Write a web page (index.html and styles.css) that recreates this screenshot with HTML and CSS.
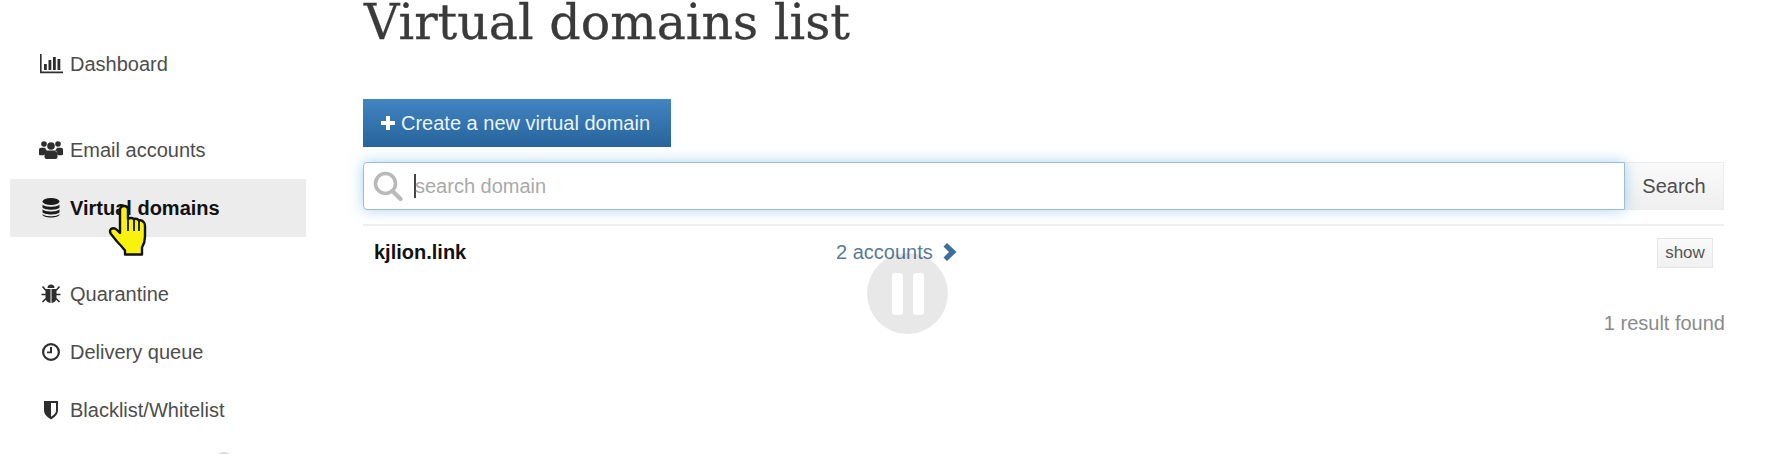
FILE: index.html
```html
<!DOCTYPE html>
<html lang="en">
<head>
<meta charset="utf-8">
<title>Virtual domains list</title>
<link rel="stylesheet" href="styles.css">
</head>
<body>
<div class="page">
  <nav class="sidebar">
    <div class="group group-first">
      <a class="item"><svg class="icon" viewBox="0 0 24 20"><path d="M1 0h1.600v17.600H24V19.200H1z"/><rect x="5" y="10" width="2.800" height="6"/><rect x="9.500" y="6" width="2.800" height="10"/><rect x="14" y="3" width="2.800" height="13"/><rect x="18.500" y="5" width="2.800" height="11"/></svg>Dashboard</a>
    </div>
    <div class="group">
      <a class="item"><svg class="icon" viewBox="0 0 24 20"><circle cx="5" cy="4" r="2.800"/><circle cx="19" cy="4" r="2.800"/><circle cx="12" cy="6" r="3.800"/><path d="M0 9.500q0-1.800 2-1.800h4q.8 2 2 3-2.500 1-3 4.500H1q-1 0-1-1zM24 9.500q0-1.800-2-1.800h-4q-.8 2-2 3 2.500 1 3 4.500h4q1 0 1-1zM9 10.500h6q3.500 0 3.500 4v2.800q0 1.700-2 1.700H7.500q-2 0-2-1.700v-2.800q0-4 3.500-4z"/></svg>Email accounts</a>
      <a class="item active"><svg class="icon" viewBox="0 0 24 20"><ellipse cx="12" cy="3.500" rx="8.500" ry="3.500"/><path d="M3.500 6.500c2 3 15 3 17 0v3c-2 3-15 3-17 0zM3.500 11.200c2 3 15 3 17 0v3c-2 3-15 3-17 0zM3.500 15.900c2 3 15 3 17 0v.6c0 4-17 4-17 0z"/></svg>Virtual domains</a>
    </div>
    <div class="group">
      <a class="item"><svg class="icon" viewBox="0 0 24 20"><path d="M8.500 4a3.500 3.500 0 0 1 7 0zM7.500 5h4v14q-4-.4-5-4V7q0-2 1-2zM12.500 5h4q1 0 1 2v8q-1 3.600-5 4z"/><path d="M3.500 2.500l3.500 4M20.500 2.500l-3.500 4M2.500 10.500h4.500M21.500 10.500h-4.500M3.500 18l3.500-3.500M20.500 18l-3.500-3.500" fill="none" stroke="currentColor" stroke-width="1.600"/></svg>Quarantine</a>
      <a class="item"><svg class="icon" viewBox="0 0 24 20"><circle cx="12" cy="10" r="7.900" fill="none" stroke="currentColor" stroke-width="2.200"/><path d="M11 5h2v6.200H8v-1.800h3z"/></svg>Delivery queue</a>
      <a class="item"><svg class="icon" viewBox="0 0 24 20"><path d="M5 1h14v9.500q0 5-7 9-7-4-7-9zM12 3v13.800q5-3 5-6.300V3z" fill-rule="evenodd"/></svg>Blacklist/Whitelist</a>
    </div>
  </nav>
  <main class="content">
    <h1 class="title">Virtual domains list</h1>
    <a class="create"><svg class="plus" viewBox="0 0 16 16"><path d="M6 1h4v5h5v4h-5v5H6v-5H1V6h5z"/></svg>Create a new virtual domain</a>
    <div class="search">
      <div class="field">
        <svg class="lens" viewBox="0 0 30 30"><circle cx="12.500" cy="12.500" r="10" fill="none" stroke="currentColor" stroke-width="3.600"/><path d="M19.500 20l8 8" fill="none" stroke="currentColor" stroke-width="4.200" stroke-linecap="round"/></svg>
        <span class="caret"></span><span class="placeholder">search domain</span>
      </div>
      <a class="search-btn">Search</a>
    </div>
    <div class="row">
      <b class="domain">kjlion.link</b>
      <a class="accounts">2 accounts<svg class="chev" viewBox="0 0 13 18"><path d="M0 3.500L3.500 0 13 9l-9.500 9L0 14.500 5.500 9z"/></svg></a>
      <a class="show">show</a>
    </div>
    <p class="count">1 result found</p>
  </main>
</div>
<div class="pause"><i></i><i></i></div>
<div class="blip"></div>
<svg class="hand" viewBox="0 0 40 52"><path d="M12 6q0-4 4-4t4 4v9q3-2 6 0 3-1 5 1.500 3-1 5 2 1 1 1 4v10q0 6-3 11v7H17v-4q-4-5-8-9L3 30q-2-3 0-5 3-2 6 1l3 3z" fill="#f9f10e" stroke="#111" stroke-width="2.400" stroke-linejoin="round"/><path d="M20 15v12M26 15v12M31 17v10" fill="none" stroke="#111" stroke-width="1.800"/></svg>
</body>
</html>
```

FILE: styles.css
```css
* { box-sizing: border-box; }
html, body { margin: 0; padding: 0; height: 454px; overflow: hidden; background: #fff; }
body { font-family: "Liberation Sans", Arial, sans-serif; color: #444; position: relative; }
.page { display: flex; height: 454px; }
.sidebar { width: 363px; padding: 35px 0 0 10px; flex: none; }
.sidebar .group { width: 296px; }
.group-first { margin-bottom: 28px; }
.group + .group { margin-bottom: 28px; }
.item { display: flex; align-items: center; height: 58px; padding-left: 29px; font-size: 20px; color: #4d4d4d; }
.item.active { background: #ececec; color: #111; font-weight: 700; }
.icon { width: 24px; height: 20px; margin-right: 7px; fill: currentColor; color: #2e2e2e; flex: none; }
.active .icon { color: #1c1c1c; }
.content { flex: none; width: 1361px; }
.title { margin: 0; padding-left: 1px; height: 99px; font-family: "DejaVu Serif", serif; font-weight: 400; font-size: 49px; line-height: 46px; color: #3a3a3a; -webkit-text-stroke: .3px #3a3a3a; }
.create { display: inline-flex; align-items: center; height: 48px; width: 308px; padding-left: 17px; font-size: 20px; color: #eaf4fb; background: linear-gradient(#4185c2, #28639b); }
.plus { width: 16px; height: 16px; fill: #fff; margin-right: 5px; }
.search { display: flex; margin-top: 15px; height: 48px; }
.field { flex: 1; display: flex; align-items: center; padding-left: 9px; border: 1px solid #9dbdd6; border-radius: 4px 0 0 4px; box-shadow: 0 0 14px rgba(102, 175, 233, .55); background: #fff; position: relative; }
.lens { width: 30px; height: 30px; color: #b9b9b9; margin-right: 11px; flex: none; }
.caret { width: 2px; height: 24px; background: #444; flex: none; }
.placeholder { font-size: 20px; color: #a9a9a9; margin-left: -1px; }
.search-btn { width: 99px; display: flex; align-items: center; justify-content: center; font-size: 20px; color: #4d4d4d; background: linear-gradient(#fafafa, #efefef); border: 1px solid #ececec; border-left: 0; }
.row { display: flex; align-items: center; margin-top: 14px; height: 54px; padding: 0 11px; border-top: 2px solid #eee; position: relative; }
.domain { width: 462px; font-size: 20px; color: #111; }
.accounts { display: flex; align-items: center; font-size: 20px; color: #5a7a96; }
.chev { width: 14px; height: 18px; fill: #3d6d9e; margin-left: 10px; }
.show { margin-left: auto; margin-top: 2px; width: 56px; height: 30px; display: flex; align-items: center; justify-content: center; font-size: 17px; color: #555; background: linear-gradient(#fafafa, #f0f0f0); border: 1px solid #e6e6e6; }
.count { margin: 33px -1px 0 0; text-align: right; font-size: 20px; line-height: 24px; color: #8a8a8a; }
.pause { position: absolute; left: 867px; top: 253px; width: 81px; height: 81px; border-radius: 50%; background: rgba(0, 0, 0, .09); display: flex; justify-content: center; align-items: center; gap: 10px; }
.pause i { width: 11px; height: 42px; border-radius: 3px; background: #fff; }
.blip { position: absolute; left: 213px; top: 452px; width: 22px; height: 22px; border-radius: 50%; background: #dcdcdc; }
.hand { position: absolute; left: 108px; top: 204px; width: 40px; height: 52px; }
```
